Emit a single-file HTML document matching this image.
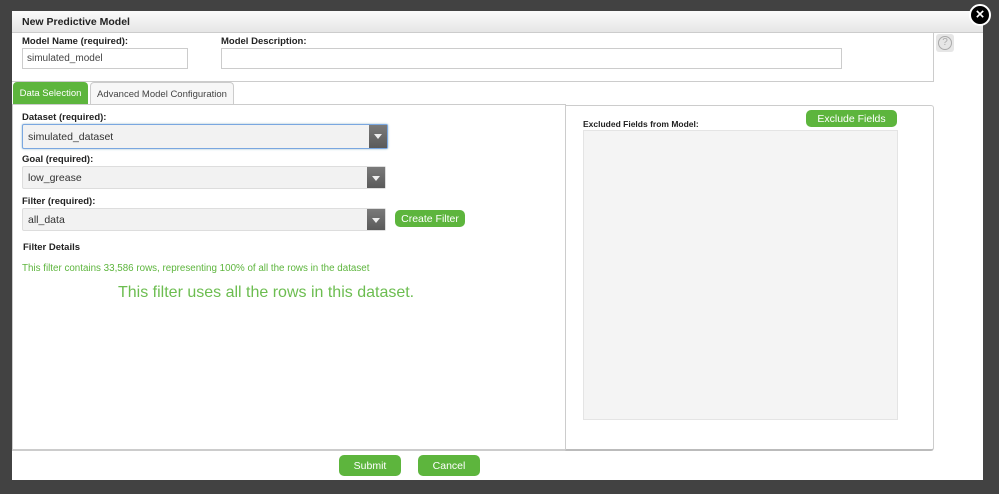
<!DOCTYPE html>
<html><head><meta charset="utf-8"><style>
*{box-sizing:border-box;margin:0;padding:0}
body{width:999px;height:494px;background:#424242;font-family:"Liberation Sans",sans-serif;position:relative;overflow:hidden;font-size:10px;color:#222}
.a{position:absolute}
.lbl{font-weight:bold;font-size:9.5px;color:#222}
.inp{background:#fff;border:1px solid #ccc;font-size:10px;color:#444;padding-left:4px;line-height:20px}
.sel{background:#f2f2f2;border:1px solid #ddd;border-radius:2px;font-size:10.5px;color:#333;padding-left:5px;line-height:23px}
.arr{position:absolute;right:0;top:0;bottom:0;width:18px;background:linear-gradient(#7a7a7a,#5a5a5a)}
.arr:after{content:"";position:absolute;left:5px;top:9px;border-left:4px solid transparent;border-right:4px solid transparent;border-top:5px solid #eee}
.btn{background:#5db53d;color:#fff;border-radius:5px;text-align:center;font-size:10.5px}
</style></head><body>
<div class="a" style="left:12px;top:11px;width:971px;height:469px;background:#fff"></div>
<div class="a" style="left:12px;top:11px;width:971px;height:22px;background:linear-gradient(#fbfbfb,#e6e6e6);border-bottom:1px solid #ccc"></div>
<div class="a" style="left:22px;top:16px;font-weight:bold;font-size:10.5px;color:#222">New Predictive Model</div>
<div class="a" style="left:969px;top:4px;width:22px;height:22px;border-radius:50%;background:#000;border:2px solid #fff;color:#fff;font-weight:bold;font-size:15px;line-height:17px;text-align:center">×</div>
<div class="a" style="left:12px;top:32px;width:922px;height:50px;border:1px solid #ccc;border-top:none;border-left:none"></div>
<div class="a lbl" style="left:22px;top:36px">Model Name (required):</div>
<div class="a lbl" style="left:221px;top:36px">Model Description:</div>
<div class="a inp" style="left:22px;top:48px;width:166px;height:21px">simulated_model</div>
<div class="a inp" style="left:221px;top:48px;width:621px;height:21px"></div>
<div class="a" style="left:936px;top:34px;width:18px;height:18px;background:#e6e6e6;border-radius:3px"><div style="margin:2px;width:14px;height:14px;border:1px solid #aaa;border-radius:50%;color:#aaa;font-size:10px;text-align:center;line-height:12px">?</div></div>
<div class="a" style="left:13px;top:82px;width:75px;height:23px;background:#5db53d;color:#fff;border-radius:4px 4px 0 0;font-size:9.5px;text-align:center;line-height:24px">Data Selection</div>
<div class="a" style="left:90px;top:82px;width:144px;height:23px;background:#f7f7f7;border:1px solid #ccc;border-bottom:none;border-radius:4px 4px 0 0;font-size:9.5px;color:#444;text-align:center;line-height:23px">Advanced Model Configuration</div>
<div class="a" style="left:12px;top:104px;width:554px;height:347px;border-left:1px solid #ccc;border-bottom:2px solid #ccc;border-top:1px solid #ccc"></div>
<div class="a lbl" style="left:22px;top:112px">Dataset (required):</div>
<div class="a sel" style="left:22px;top:124px;width:366px;height:25px;border:1px solid #7aa7e0;line-height:25px;box-shadow:0 0 2px #9bc">simulated_dataset<div class="arr"></div></div>
<div class="a lbl" style="left:22px;top:154px">Goal (required):</div>
<div class="a sel" style="left:22px;top:166px;width:364px;height:23px">low_grease<div class="arr"></div></div>
<div class="a lbl" style="left:22px;top:196px">Filter (required):</div>
<div class="a sel" style="left:22px;top:208px;width:364px;height:23px">all_data<div class="arr"></div></div>
<div class="a btn" style="left:395px;top:210px;width:70px;height:17px;line-height:18px">Create Filter</div>
<div class="a lbl" style="left:23px;top:242px">Filter Details</div>
<div class="a" style="left:22px;top:263px;font-size:9.8px;color:#5db53d">This filter contains 33,586 rows, representing 100% of all the rows in the dataset</div>
<div class="a" style="left:118px;top:284px;font-size:16px;color:#6cbd50">This filter uses all the rows in this dataset.</div>
<div class="a" style="left:565px;top:105px;width:369px;height:346px;border:1px solid #ccc;border-bottom:2px solid #bbb;border-radius:0 3px 3px 0"></div>
<div class="a lbl" style="left:583px;top:119px;font-size:8.5px">Excluded Fields from Model:</div>
<div class="a btn" style="left:806px;top:110px;width:91px;height:17px;line-height:18px;font-size:10.5px">Exclude Fields</div>
<div class="a" style="left:583px;top:130px;width:315px;height:290px;background:#f4f4f4;border:1px solid #e4e4e4"></div>
<div class="a btn" style="left:339px;top:455px;width:62px;height:21px;line-height:22px">Submit</div>
<div class="a btn" style="left:418px;top:455px;width:62px;height:21px;line-height:22px">Cancel</div>
</body></html>
